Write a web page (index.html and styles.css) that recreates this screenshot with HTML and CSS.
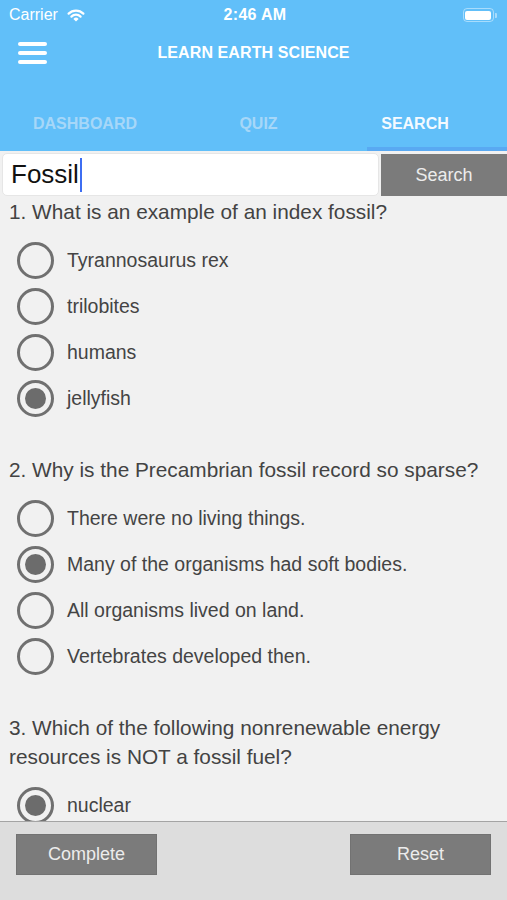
FILE: index.html
```html
<!DOCTYPE html>
<html>
<head>
<meta charset="utf-8">
<link rel="stylesheet" href="styles.css">
</head>
<body>
<div class="app">
  <header class="header">
    <div class="status">
      <div class="status-left">
        <span class="carrier">Carrier</span>
        <svg class="wifi" width="18" height="14" viewBox="0 0 18 14">
          <path d="M1.6 5.6 A10.5 10.5 0 0 1 16.4 5.6" fill="none" stroke="#fff" stroke-width="2.2" stroke-linecap="round"/>
          <path d="M4.4 8.6 A6.5 6.5 0 0 1 13.6 8.6" fill="none" stroke="#fff" stroke-width="2.2" stroke-linecap="round"/>
          <path d="M9 13.5 L6.4 10.9 A3.6 3.6 0 0 1 11.6 10.9 Z" fill="#fff"/>
        </svg>
      </div>
      <span class="time">2:46 AM</span>
      <div class="status-right">
        <div class="battery"><div class="battery-fill"></div></div>
        <div class="battery-nub"></div>
      </div>
    </div>
    <div class="navbar">
      <div class="hamburger"><span></span><span></span><span></span></div>
      <div class="title">LEARN EARTH SCIENCE</div>
    </div>
    <nav class="tabs">
      <div class="tab">DASHBOARD</div>
      <div class="tab">QUIZ</div>
      <div class="tab active">SEARCH</div>
    </nav>
    <div class="indicator-row"><div class="indicator"></div></div>
  </header>

  <div class="search-row">
    <div class="search-input"><span class="query">Fossil</span><span class="caret"></span></div>
    <div class="search-btn">Search</div>
  </div>

  <main class="content">
    <section class="question">
      <p class="q-text">1. What is an example of an index fossil?</p>
      <div class="option"><span class="radio"></span><span class="opt-text">Tyrannosaurus rex</span></div>
      <div class="option"><span class="radio"></span><span class="opt-text">trilobites</span></div>
      <div class="option"><span class="radio"></span><span class="opt-text">humans</span></div>
      <div class="option"><span class="radio checked"></span><span class="opt-text">jellyfish</span></div>
    </section>
    <section class="question">
      <p class="q-text">2. Why is the Precambrian fossil record so sparse?</p>
      <div class="option"><span class="radio"></span><span class="opt-text">There were no living things.</span></div>
      <div class="option"><span class="radio checked"></span><span class="opt-text">Many of the organisms had soft bodies.</span></div>
      <div class="option"><span class="radio"></span><span class="opt-text">All organisms lived on land.</span></div>
      <div class="option"><span class="radio"></span><span class="opt-text">Vertebrates developed then.</span></div>
    </section>
    <section class="question">
      <p class="q-text">3. Which of the following nonrenewable energy resources is NOT a fossil fuel?</p>
      <div class="option"><span class="radio checked"></span><span class="opt-text">nuclear</span></div>
    </section>
  </main>

  <footer class="footer">
    <div class="btn">Complete</div>
    <div class="btn">Reset</div>
  </footer>
</div>
</body>
</html>
```

FILE: styles.css
```css
* { box-sizing: border-box; }
html, body { margin: 0; padding: 0; }
body {
  font-family: "Liberation Sans", Arial, sans-serif;
  background: #f1f1f1;
}
.app {
  width: 507px;
  height: 900px;
  display: flex;
  flex-direction: column;
  overflow: hidden;
}
.header {
  background: #61bff9;
  color: #fff;
  flex: none;
}
.status {
  height: 30px;
  display: flex;
  align-items: center;
  justify-content: space-between;
  padding: 0 10px 0 9px;
}
.status-left { display: flex; align-items: center; gap: 9px; width: 120px; }
.carrier { font-size: 16px; }
.wifi { margin-top: -1px; }
.time { font-size: 16px; font-weight: bold; margin-left: 4px; letter-spacing: 0.3px; }
.status-right { width: 120px; display: flex; justify-content: flex-end; align-items: center; }
.battery {
  width: 31px;
  height: 14px;
  border: 1.5px solid rgba(255,255,255,0.45);
  border-radius: 4px;
  padding: 1.5px;
}
.battery-fill { width: 100%; height: 100%; background: #fff; border-radius: 2px; }
.battery-nub { width: 2px; height: 5px; background: rgba(255,255,255,0.45); border-radius: 0 1px 1px 0; margin-left: 1px; }
.navbar {
  height: 46px;
  display: flex;
  align-items: center;
  padding-left: 18px;
}
.hamburger { width: 29px; display: flex; flex-direction: column; gap: 5px; }
.hamburger span { display: block; height: 4px; background: #fff; border-radius: 2px; }
.title {
  flex: 1;
  text-align: center;
  font-size: 16px;
  font-weight: bold;
  margin-right: 47px;
  letter-spacing: 0.1px;
}
.tabs {
  margin-top: 24px;
  height: 47px;
  display: grid;
  grid-template-columns: 170px 177px 1fr;
  align-items: center;
}
.tab {
  text-align: center;
  font-size: 16px;
  font-weight: bold;
  color: #a6d7f8;
}
.tab.active { color: #f4faff; padding-right: 24px; }
.indicator-row { height: 4px; display: flex; justify-content: flex-end; }
.indicator { width: 140px; height: 4px; background: #59a9f2; }

.search-row {
  flex: none;
  display: flex;
  gap: 2px;
  margin-top: 2px;
  height: 43px;
  padding-left: 2px;
}
.search-input {
  width: 377px;
  background: #fff;
  border-radius: 5px;
  display: flex;
  align-items: center;
  padding-left: 8px;
  border: 1px solid #e6e6e6;
}
.query { font-size: 26px; color: #111; }
.caret { width: 2px; height: 34px; background: #3d6ef2; margin-left: 1px; }
.search-btn {
  flex: 1;
  margin-top: 1px;
  background: #7b7b7b;
  color: #ececec;
  font-size: 18px;
  display: flex;
  align-items: center;
  justify-content: center;
}

.content {
  flex: 1;
  overflow: hidden;
  padding: 1px 9px 0;
}
.question { margin-bottom: 34px; }
.q-text {
  margin: 0 0 11px;
  font-size: 20.8px;
  line-height: 29px;
  color: #434343;
}
.option {
  height: 46px;
  display: flex;
  align-items: center;
  padding-left: 8px;
  gap: 13px;
}
.radio {
  width: 37px;
  height: 37px;
  border: 3px solid #707070;
  border-radius: 50%;
  flex: none;
  display: flex;
  align-items: center;
  justify-content: center;
}
.radio.checked::after {
  content: "";
  width: 21px;
  height: 21px;
  border-radius: 50%;
  background: #6c6c6c;
}
.opt-text { font-size: 19.5px; color: #444; }

.footer {
  flex: none;
  height: 79px;
  background: #dddddd;
  border-top: 1px solid #a4a4a4;
  display: flex;
  justify-content: space-between;
  align-items: flex-start;
  padding: 12px 16px 0;
}
.btn {
  width: 141px;
  height: 41px;
  background: #7b7b7b;
  border: 1px solid #727272;
  color: #ececec;
  font-size: 18px;
  display: flex;
  align-items: center;
  justify-content: center;
}
```
